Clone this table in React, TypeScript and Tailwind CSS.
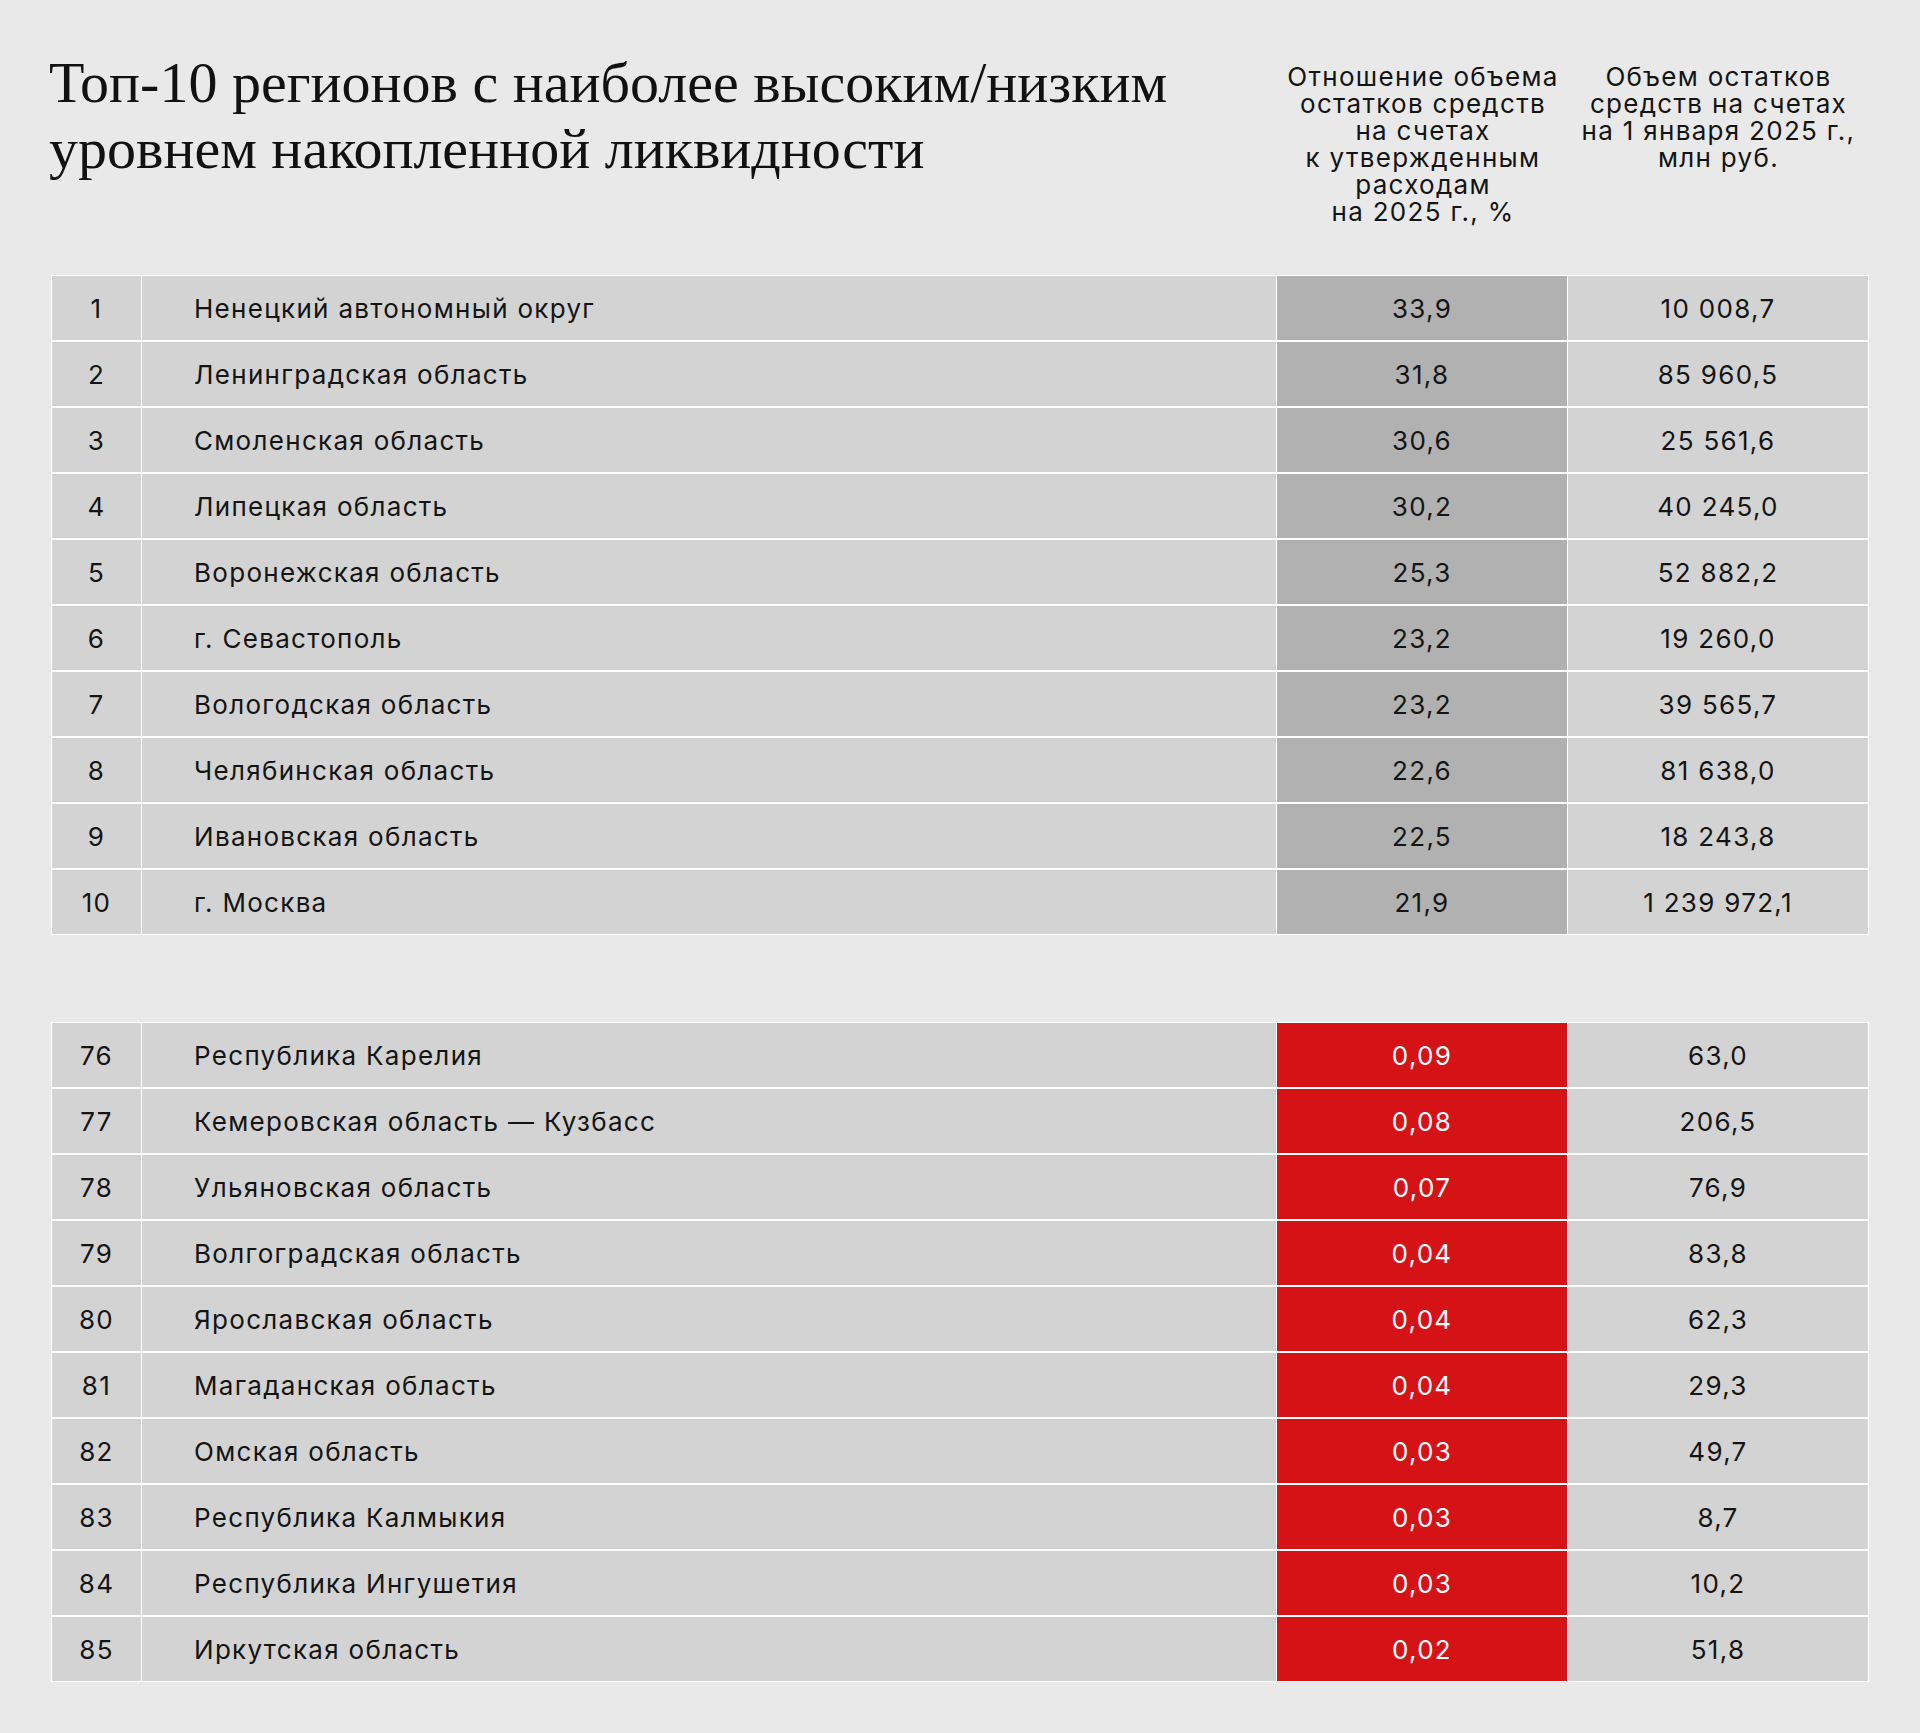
const top = [
  { n: '1', name: 'Ненецкий автономный округ', ratio: '33,9', sum: '10 008,7' },
  { n: '2', name: 'Ленинградская область', ratio: '31,8', sum: '85 960,5' },
  { n: '3', name: 'Смоленская область', ratio: '30,6', sum: '25 561,6' },
  { n: '4', name: 'Липецкая область', ratio: '30,2', sum: '40 245,0' },
  { n: '5', name: 'Воронежская область', ratio: '25,3', sum: '52 882,2' },
  { n: '6', name: 'г. Севастополь', ratio: '23,2', sum: '19 260,0' },
  { n: '7', name: 'Вологодская область', ratio: '23,2', sum: '39 565,7' },
  { n: '8', name: 'Челябинская область', ratio: '22,6', sum: '81 638,0' },
  { n: '9', name: 'Ивановская область', ratio: '22,5', sum: '18 243,8' },
  { n: '10', name: 'г. Москва', ratio: '21,9', sum: '1 239 972,1' },
];

const bottom = [
  { n: '76', name: 'Республика Карелия', ratio: '0,09', sum: '63,0' },
  { n: '77', name: 'Кемеровская область — Кузбасс', ratio: '0,08', sum: '206,5' },
  { n: '78', name: 'Ульяновская область', ratio: '0,07', sum: '76,9' },
  { n: '79', name: 'Волгоградская область', ratio: '0,04', sum: '83,8' },
  { n: '80', name: 'Ярославская область', ratio: '0,04', sum: '62,3' },
  { n: '81', name: 'Магаданская область', ratio: '0,04', sum: '29,3' },
  { n: '82', name: 'Омская область', ratio: '0,03', sum: '49,7' },
  { n: '83', name: 'Республика Калмыкия', ratio: '0,03', sum: '8,7' },
  { n: '84', name: 'Республика Ингушетия', ratio: '0,03', sum: '10,2' },
  { n: '85', name: 'Иркутская область', ratio: '0,02', sum: '51,8' },
];

type Row = { n: string; name: string; ratio: string; sum: string };

const RegionTable = ({ rows, low }: { rows: Row[]; low?: boolean }) => (
  <div className="flex flex-col gap-y-[2px] bg-white p-px">
    {rows.map((r) => (
      <div key={r.n} className="grid h-[64px] grid-cols-[89px_1fr_290px_300px] gap-x-px">
        <div className="flex items-center justify-center bg-[#d3d3d3]">{r.n}</div>
        <div className="flex items-center bg-[#d3d3d3] pl-[52px]">{r.name}</div>
        <div
          className={
            low
              ? 'flex items-center justify-center bg-[#d51317] text-white'
              : 'flex items-center justify-center bg-[#b1b1b1]'
          }
        >
          {r.ratio}
        </div>
        <div className="flex items-center justify-center bg-[#d3d3d3]">{r.sum}</div>
      </div>
    ))}
  </div>
);

export default function App() {
  return (
    <div className="min-h-[1733px] w-full bg-[#e9e9e9] px-[51px] font-['Inter',sans-serif] text-[26px] tracking-[0.05em] text-[#141414]">
      <div className="flex items-start">
        <h1 className="-ml-[2px] flex-1 pt-[50px] font-['Liberation_Serif',serif] text-[58px] font-normal leading-[66px] tracking-normal text-[#111]">
          Топ-10 регионов с наиболее высоким/низким
          <br />
          уровнем накопленной ликвидности
        </h1>
        <div className="mt-[63px] w-[290px] text-center leading-[27px]">
          Отношение объема
          <br />
          остатков средств
          <br />
          на счетах
          <br />к утвержденным
          <br />
          расходам
          <br />
          на 2025 г., %
        </div>
        <div className="mt-[63px] w-[301px] text-center leading-[27px]">
          Объем остатков
          <br />
          средств на счетах
          <br />
          на 1 января 2025 г.,
          <br />
          млн руб.
        </div>
      </div>

      <div className="mt-[50px]">
        <RegionTable rows={top} />
      </div>
      <div className="mt-[87px]">
        <RegionTable rows={bottom} low />
      </div>
    </div>
  );
}
